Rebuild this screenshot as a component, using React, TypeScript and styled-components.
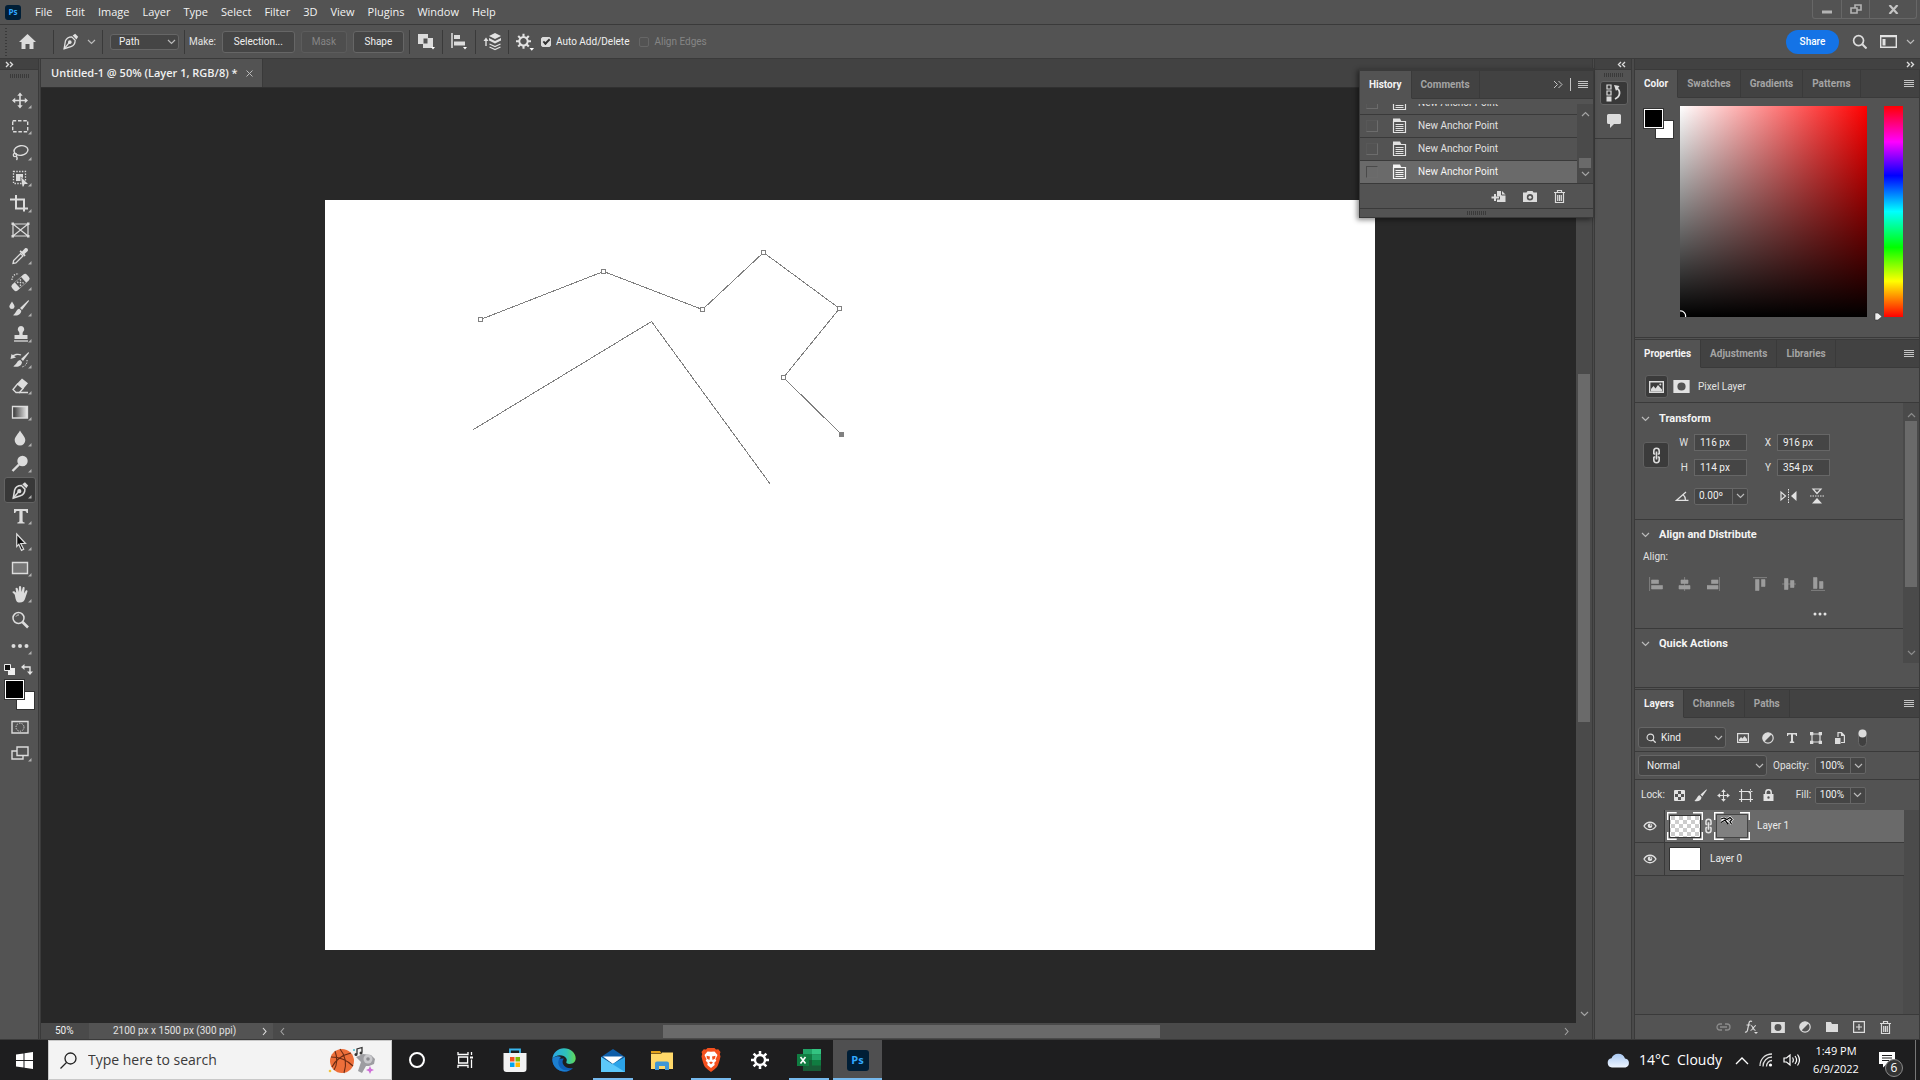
import React from "react";
import styled, { createGlobalStyle, css } from "styled-components";

const c = {
  panel: "#535353",
  dark: "#424242",
  line: "#3a3a3a",
  field: "#454545",
  edge: "#666666",
  canvas: "#282828",
  track: "#4a4a4a",
  thumb: "#6a6a6a",
  text: "#e2e2e2",
  dim: "#a4a4a4",
  icon: "#dcdcdc",
};

const ui = `Roboto, "Open Sans", "Liberation Sans", sans-serif`;
const segoe = `"Open Sans", "Noto Sans", "Liberation Sans", sans-serif`;

const Global = createGlobalStyle`
  *, *::before, *::after { box-sizing: border-box; }
  body { margin: 0; background: ${c.canvas}; overflow: hidden; }
  button, input, select { font: inherit; color: inherit; margin: 0; padding: 0; border: 0; background: none; border-radius: 0; outline: none; }
  h1, h2, h3, p, ul { margin: 0; padding: 0; font-size: inherit; font-weight: inherit; list-style: none; }
  svg { display: block; flex: none; }
`;

const Screen = styled.div`
  display: flex;
  flex-direction: column;
  height: 100vh;
  font: 10px/12px ${ui};
  color: ${c.text};
  background: ${c.panel};
  white-space: nowrap;
`;

/* ---------- menu bar ---------- */

const MenuBar = styled.header`
  display: flex;
  align-items: flex-start;
  justify-content: space-between;
  height: 24px;
  flex: none;
  padding: 0 3px 0 5px;
`;
const Menus = styled.nav`
  display: flex;
  align-items: center;
  gap: 13px;
  height: 24px;
  font: 11px/16px ${segoe};
  color: #f2f2f2;
`;
const Logo = styled.span<{ $big?: boolean }>`
  display: grid;
  place-items: center;
  width: ${(p) => (p.$big ? 22 : 16)}px;
  height: ${(p) => (p.$big ? 21 : 15)}px;
  margin-right: ${(p) => (p.$big ? 0 : 1)}px;
  border-radius: 3px;
  background: #001e36;
  color: #31a8ff;
  font: 700 ${(p) => (p.$big ? 11 : 8)}px/12px ${segoe};
`;
const MenuItem = styled.button``;
const WindowControls = styled.div`
  display: grid;
  grid-template-columns: 28px 28px 47px;
  height: 19px;
  border: 1px solid #676767;
  border-top: 0;
  border-radius: 0 0 3px 3px;
`;
const WindowButton = styled.button`
  display: grid;
  place-items: center;
  & + & { border-left: 1px solid #676767; }
`;

/* ---------- options bar ---------- */

const Options = styled.section`
  display: flex;
  align-items: center;
  height: 34px;
  flex: none;
  padding: 0 5px 0 0;
  border-top: 1px solid ${c.line};
`;
const Grip = styled.span<{ $vertical?: boolean }>`
  display: block;
  flex: none;
  ${(p) =>
    p.$vertical
      ? css`width: 2px; height: 28px; margin-left: 5px; background: repeating-linear-gradient(${c.line} 0 1px, transparent 1px 3px);`
      : css`width: 20px; height: 4px; background: repeating-linear-gradient(90deg, ${c.line} 0 1px, transparent 1px 2px);`}
`;
const Cell = styled.div<{ $w: number; $sep?: boolean; $gap?: number; $pad?: number }>`
  display: flex;
  align-items: center;
  justify-content: ${(p) => (p.$pad === undefined ? "center" : "flex-start")};
  gap: ${(p) => p.$gap ?? 6}px;
  min-width: ${(p) => p.$w}px;
  height: 24px;
  padding-left: ${(p) => p.$pad ?? 0}px;
  border-right: ${(p) => (p.$sep ? `1px solid ${c.line}` : "0")};
`;
const Plain = styled.button<{ $gap?: number }>`
  display: flex;
  align-items: center;
  justify-content: center;
  gap: ${(p) => p.$gap ?? 0}px;
`;
const PushButton = styled.button<{ $w: number }>`
  width: ${(p) => p.$w}px;
  height: 22px;
  border: 1px solid ${c.edge};
  border-radius: 3px;
  background: ${c.field};
  color: #f0f0f0;
  &:disabled { background: #4e4e4e; border-color: #5c5c5c; color: #858585; }
`;
const Check = styled.label<{ $off?: boolean }>`
  display: flex;
  align-items: center;
  gap: 5px;
  margin-right: 10px;
  color: ${(p) => (p.$off ? "#858585" : "#f0f0f0")};
  input {
    appearance: none;
    display: grid;
    place-items: center;
    width: 10px;
    height: 10px;
    border-radius: 2px;
    border: 1px solid ${(p) => (p.$off ? "#666" : c.icon)};
  }
  input:checked { background: ${c.icon}; }
  input:checked::after {
    content: "";
    width: 7px;
    height: 4px;
    border: solid #333;
    border-width: 0 0 2px 2px;
    transform: translateY(-1px) rotate(-45deg);
  }
`;
const OptionsEnd = styled.div`
  display: flex;
  align-items: center;
  gap: 13px;
  margin-left: auto;
`;
const Share = styled.button`
  width: 53px;
  height: 24px;
  border-radius: 12px;
  background: #1473e6;
  color: #fff;
  font-weight: 500;
`;

const Drop = styled.span<{ $w: number; $h: number; $icon?: boolean }>`
  position: relative;
  display: inline-flex;
  align-items: center;
  width: ${(p) => p.$w}px;
  height: ${(p) => p.$h}px;
  select {
    appearance: none;
    width: 100%;
    height: 100%;
    padding-left: ${(p) => (p.$icon ? 22 : 8)}px;
    border: 1px solid ${c.edge};
    border-radius: 3px;
    background: ${c.field};
    color: #f0f0f0;
  }
  svg { position: absolute; pointer-events: none; right: 3px; }
  .lead { right: auto; left: 8px; }
`;

/* ---------- workspace ---------- */

const Workspace = styled.main`
  display: grid;
  grid-template-columns: 38px 3px minmax(0, 1fr) 3px 36px 4px 285px;
  flex: 1;
  min-height: 0;
  border-top: 1px solid ${c.line};
  border-bottom: 1px solid ${c.line};
`;
const Divider = styled.div`
  background: #4a4a4a;
  border-left: 1px solid ${c.line};
  border-right: 1px solid ${c.line};
`;
const DockHead = styled.div<{ $end?: boolean }>`
  display: flex;
  align-items: center;
  justify-content: ${(p) => (p.$end ? "flex-end" : "flex-start")};
  flex: none;
  height: 11px;
  padding: 0 5px;
  background: ${c.dark};
  border-bottom: 1px solid ${c.line};
`;
const Column = styled.aside`
  display: flex;
  flex-direction: column;
  min-height: 0;
  background: ${c.panel};
`;
const Tools = styled.div`
  display: flex;
  flex-direction: column;
  align-items: center;
  padding: 4px 0 0 2px;
  ul { margin-top: 9px; }
`;
const Tool = styled.button<{ $on?: boolean }>`
  display: grid;
  place-items: center;
  width: 32px;
  height: 26px;
  border: 1px solid ${(p) => (p.$on ? "#636363" : "transparent")};
  border-radius: 3px;
  background: ${(p) => (p.$on ? "#383838" : "transparent")};
  color: ${c.icon};
`;
const MiniRow = styled.div`
  display: flex;
  align-items: center;
  justify-content: center;
  gap: 6px;
  height: 21px;
  padding-right: 4px;
`;
const Swatches = styled.div`
  position: relative;
  flex: none;
  width: 30px;
  height: 30px;
`;
const Swatch = styled.button<{ $front?: boolean }>`
  position: absolute;
  width: 19px;
  height: 19px;
  ${(p) =>
    p.$front
      ? css`left: 0; top: 0; background: #000; border: 1px solid #fff; outline: 1px solid #333;`
      : css`right: 0; bottom: 0; background: #fff; border: 1px solid #333;`}
`;
const ScreenTools = styled.div`
  padding-top: 4px;
`;

const Document = styled.section`
  position: relative;
  display: grid;
  grid-template-rows: 29px minmax(0, 1fr) 16px;
  grid-template-columns: minmax(0, 1fr) 16px;
  min-width: 0;
  min-height: 0;
`;
const DocTabs = styled.div`
  grid-column: 1 / -1;
  background: ${c.dark};
  border-bottom: 1px solid #303030;
`;
const DocTab = styled.div`
  display: inline-flex;
  align-items: center;
  gap: 8px;
  height: 28px;
  padding: 0 9px 0 10px;
  background: ${c.panel};
  border-right: 1px solid ${c.line};
  color: #f0f0f0;
  font: 600 11px/16px ${segoe};
`;
const Canvas = styled.div`
  overflow: hidden;
  background: ${c.canvas};
  padding: 112px 0 0 284px;
`;
const Paper = styled.div`
  width: 1050px;
  height: 750px;
  background: #fff;
`;
const VScroll = styled.div`
  display: grid;
  grid-template-rows: 286fr 348fr 301fr;
  justify-items: center;
  background: ${c.track};
  color: ${c.dim};
  span { width: 12px; background: ${c.thumb}; }
  svg { align-self: end; margin-bottom: 6px; }
`;
const Status = styled.footer`
  grid-column: 1 / -1;
  display: flex;
  background: ${c.panel};
`;
const Zoom = styled.input`
  width: 48px;
  padding-left: 14px;
  background: ${c.track};
  color: #f0f0f0;
`;
const DocInfo = styled.button`
  display: flex;
  align-items: center;
  justify-content: space-between;
  width: 184px;
  padding: 0 6px 0 24px;
  color: ${c.text};
`;
const HScroll = styled.div`
  flex: 1;
  display: grid;
  grid-template-columns: 390fr 497fr 416fr;
  align-items: center;
  background: ${c.track};
  color: ${c.dim};
  padding-right: 16px;
  span { height: 13px; background: ${c.thumb}; }
  svg { margin: 0 7px; }
  svg:last-child { justify-self: end; }
`;

/* ---------- panels ---------- */

const Panel = styled.section<{ $h?: number }>`
  display: flex;
  flex-direction: column;
  flex: ${(p) => (p.$h ? "none" : "1")};
  height: ${(p) => (p.$h ? `${p.$h}px` : "auto")};
  min-height: 0;
  border-right: 1px solid ${c.line};
  & + & { border-top: 3px double ${c.line}; }
`;
const TabStrip = styled.div`
  display: flex;
  flex: none;
  height: 28px;
  background: ${c.dark};
`;
const Tab = styled.button<{ $on?: boolean }>`
  padding: 0 9px;
  border-right: 1px solid ${c.line};
  border-bottom: 1px solid ${(p) => (p.$on ? c.panel : c.line)};
  background: ${(p) => (p.$on ? c.panel : "transparent")};
  color: ${(p) => (p.$on ? "#f4f4f4" : c.dim)};
  font-weight: 700;
`;
const TabEnd = styled.div`
  display: flex;
  flex: 1;
  align-items: center;
  justify-content: flex-end;
  gap: 7px;
  padding-right: 5px;
  border-bottom: 1px solid ${c.line};
  color: #c4c4c4;
`;
const Row = styled.div<{ $h: number; $line?: boolean; $gap?: number; $pad?: number; $top?: number }>`
  display: flex;
  align-items: center;
  flex: none;
  gap: ${(p) => p.$gap ?? 0}px;
  height: ${(p) => p.$h}px;
  padding-top: ${(p) => p.$top ?? 0}px;
  padding-left: ${(p) => p.$pad ?? 0}px;
  border-bottom: ${(p) => (p.$line ? `1px solid ${c.line}` : "0")};
`;

const HistoryPanel = styled.section`
  position: absolute;
  top: 9px;
  right: -2px;
  display: flex;
  flex-direction: column;
  width: 235px;
  border: 1px solid ${c.line};
  border-top-width: 3px;
  background: ${c.panel};
  box-shadow: -2px 2px 5px rgba(0, 0, 0, 0.45);
`;
const HistoryBody = styled.div`
  display: grid;
  grid-template-columns: minmax(0, 1fr) 16px;
  height: 80px;
  margin-top: 5px;
  border-bottom: 1px solid ${c.line};
`;
const HistoryList = styled.ul`
  display: flex;
  flex-direction: column;
  justify-content: flex-end;
  overflow: hidden;
`;
const HistoryItem = styled.li<{ $on?: boolean }>`
  display: flex;
  align-items: center;
  flex: none;
  height: 23px;
  padding-left: 6px;
  border-top: 1px solid ${c.line};
  background: ${(p) => (p.$on ? c.thumb : "transparent")};
  color: ${(p) => (p.$on ? "#f4f4f4" : c.text)};
  input {
    appearance: none;
    width: 12px;
    height: 12px;
    margin-right: 14px;
    border: 1px solid #6c6c6c;
    border-top-color: ${(p) => (p.$on ? "#4a4a4a" : "#585858")};
    border-left-color: ${(p) => (p.$on ? "#4a4a4a" : "#585858")};
  }
  svg { margin-right: 11px; }
`;
const HistoryScroll = styled.div`
  display: grid;
  grid-template-rows: 54px 10px 1fr;
  justify-items: center;
  background: ${c.track};
  color: ${c.dim};
  span { width: 12px; background: ${c.thumb}; }
  svg { margin-top: 7px; }
  svg:last-child { margin-top: 3px; }
`;
const HistoryActions = styled.div`
  display: flex;
  align-items: center;
  justify-content: flex-end;
  gap: 17px;
  height: 25px;
  padding-right: 28px;
  border-bottom: 1px solid ${c.line};
  color: ${c.icon};
`;
const HistoryFoot = styled.div`
  display: grid;
  place-items: center;
  height: 8px;
`;

const IconDock = styled.div`
  display: flex;
  flex-direction: column;
  align-items: center;
  height: 69px;
  padding: 3px 0 0 1px;
  border-bottom: 1px solid ${c.line};
`;
const DockButton = styled.button<{ $on?: boolean }>`
  display: grid;
  place-items: center;
  flex: none;
  width: 28px;
  height: 24px;
  margin-top: 4px;
  border: 1px solid ${(p) => (p.$on ? "#636363" : "transparent")};
  border-radius: 3px;
  background: ${(p) => (p.$on ? "#383838" : "transparent")};
  color: ${c.icon};
`;

const ColorBody = styled.div`
  display: flex;
  padding: 8px 0 0 9px;
`;
const ColorSwatches = styled.div`
  padding: 3px 6px 0 0;
`;
const Field = styled.div`
  width: 187px;
  height: 211px;
  background: linear-gradient(to top, #000, transparent), linear-gradient(to right, #fff, #f00);
  display: flex;
  align-items: flex-end;
`;
const HueMarker = styled.div`
  display: flex;
  align-items: flex-end;
  width: 17px;
  height: 215px;
  padding-left: 7px;
`;
const Hue = styled.input`
  appearance: none;
  width: 19px;
  height: 211px;
  background: linear-gradient(#f00, #f0f 17%, #00f 33%, #0ff 50%, #0f0 67%, #ff0 83%, #f00);
  &::-webkit-slider-thumb { appearance: none; width: 0; height: 0; }
`;

const Props = styled.div`
  display: grid;
  grid-template-columns: minmax(0, 1fr) 16px;
  height: 260px;
`;
const PropScroll = styled.div`
  display: grid;
  grid-template-rows: 18px 166px 1fr;
  justify-items: center;
  background: ${c.track};
  color: #8c8c8c;
  span { width: 12px; background: ${c.thumb}; }
  svg { margin-top: 9px; }
  svg:last-child { align-self: end; margin-bottom: 7px; }
`;
const SquareButton = styled.button<{ $s: number }>`
  display: grid;
  place-items: center;
  width: ${(p) => p.$s}px;
  height: ${(p) => p.$s}px;
  border: 1px solid #606060;
  border-radius: 3px;
  background: #3b3b3b;
  color: ${c.icon};
`;
const Heading = styled.button<{ $h: number }>`
  display: flex;
  align-items: center;
  gap: 9px;
  flex: none;
  height: ${(p) => p.$h}px;
  padding-left: 6px;
  color: #f4f4f4;
  font-size: 11px;
  font-weight: 700;
`;
const Block = styled.div<{ $h: number }>`
  display: flex;
  flex-direction: column;
  height: ${(p) => p.$h}px;
  border-bottom: 1px solid ${c.line};
  &:last-child { border-bottom: 0; }
`;
const TransformGrid = styled.div`
  display: grid;
  grid-template-columns: 27px 24px 53px 30px 53px;
  grid-template-rows: 17px 17px 24px;
  row-gap: 8px;
  align-items: center;
  padding-left: 8px;
  label { justify-self: end; padding-right: 6px; color: ${c.text}; }
`;
const LinkCell = styled.div`
  grid-row: 1 / 3;
`;
const AngleCell = styled.div`
  justify-self: end;
  padding-right: 5px;
`;
const Num = styled.input`
  width: 100%;
  height: 17px;
  padding-left: 5px;
  border: 1px solid ${c.edge};
  background: ${c.field};
  color: #f0f0f0;
`;
const Combo = styled.div<{ $w: number }>`
  display: flex;
  width: ${(p) => p.$w}px;
  height: 17px;
  border: 1px solid ${c.edge};
  border-radius: 2px;
  background: ${c.field};
  color: #f0f0f0;
  input { flex: 1; min-width: 0; padding-left: 4px; }
  button { display: grid; place-items: center; width: 15px; border-left: 1px solid ${c.edge}; }
`;
const Flips = styled.div`
  grid-column: 4 / 6;
  display: flex;
  justify-content: flex-end;
  gap: 13px;
  padding-right: 6px;
`;
const AlignRow = styled.div`
  display: flex;
  align-items: center;
  gap: 15px;
  height: 39px;
  padding-left: 14px;
  color: #9c9c9c;
  svg:nth-child(4) { margin-left: 17px; }
`;
const More = styled.button`
  align-self: flex-end;
  margin: 4px 76px 0 0;
`;

const FilterIcons = styled.div`
  display: flex;
  align-items: center;
  gap: 13px;
  color: ${c.icon};
`;
const Spread = styled.div<{ $w: number; $left?: number }>`
  display: flex;
  align-items: center;
  justify-content: space-between;
  width: ${(p) => p.$w}px;
  margin-left: ${(p) => p.$left ?? 0}px;
`;
const LayerTree = styled.ul`
  flex: 1;
  background: linear-gradient(90deg, #505050 268px, #4b4b4b 268px);
  && { padding-right: 15px; }
`;
const LayerRow = styled.li`
  display: grid;
  grid-template-columns: 30px minmax(0, 1fr);
  height: 33px;
  border-bottom: 1px solid ${c.line};
  background: ${c.panel};
`;
const LayerEye = styled.button`
  display: grid;
  place-items: center;
  border-right: 1px solid ${c.line};
`;
const LayerMain = styled.div<{ $on?: boolean }>`
  display: flex;
  align-items: center;
  gap: 1px;
  padding-left: 2px;
  background: ${(p) => (p.$on ? c.thumb : "transparent")};
  span { margin-left: 6px; color: #ececec; }
`;
const LayerActions = styled.div`
  display: grid;
  grid-template-columns: repeat(7, 27px);
  align-items: center;
  justify-content: end;
  flex: none;
  height: 25px;
  padding-right: 20px;
  border-top: 1px solid ${c.line};
  color: ${c.icon};
`;

/* ---------- taskbar ---------- */

const Taskbar = styled.footer`
  display: flex;
  align-items: stretch;
  flex: none;
  height: 40px;
  background: #1e1e1f;
  color: #fff;
  font-family: ${segoe};
`;
const Start = styled.button`
  display: grid;
  place-items: center;
  width: 48px;
`;
const Search = styled.label`
  display: flex;
  align-items: center;
  gap: 11px;
  width: 344px;
  padding: 0 15px 0 11px;
  border: 1px solid #c8c8c8;
  background: #f3f3f3;
  color: #333;
  input { flex: 1; min-width: 0; font: 14px/20px ${segoe}; }
  input::placeholder { color: #3a3a3a; opacity: 1; }
`;
const TaskApp = styled.button<{ $open?: boolean; $on?: boolean }>`
  display: grid;
  place-items: center;
  width: 49px;
  background: ${(p) => (p.$on ? "#4f4f50" : "transparent")};
  box-shadow: ${(p) => (p.$on ? "inset 0 -2px #76b9ed" : "none")};
  ${(p) => p.$open && css`background: linear-gradient(#76b9ed, #76b9ed) center bottom / 40px 2px no-repeat;`}
`;
const Tray = styled.div`
  display: flex;
  align-items: center;
  margin-left: auto;
  padding-right: 4px;
`;
const Weather = styled.button`
  display: flex;
  align-items: center;
  gap: 9px;
  margin-right: 13px;
  font-size: 14px;
  line-height: 20px;
  white-space: pre;
`;
const TrayIcons = styled.div`
  display: flex;
  align-items: center;
  gap: 7px;
`;
const Clock = styled.button`
  width: 72px;
  font-size: 11px;
  line-height: 18px;
  text-align: center;
`;
const Notice = styled.button`
  position: relative;
  display: grid;
  place-items: center;
  width: 44px;
  height: 40px;
  padding-right: 13px;
  border-right: 1px solid #777;
  span {
    position: absolute;
    left: 13px;
    top: 19px;
    width: 18px;
    height: 18px;
    border: 1px solid #8a8a8a;
    border-radius: 50%;
    background: #333;
    font-size: 12px;
    line-height: 16px;
  }
`;

/* ---------- icons ---------- */

type IconProps = { w: number; h?: number; children: React.ReactNode; className?: string; vb?: string };
const Svg = ({ w, h = w, children, className, vb }: IconProps) => (
  <svg className={className} width={w} height={h} viewBox={vb ?? `0 0 ${w} ${h}`} fill="none" stroke="currentColor" aria-hidden="true">
    {children}
  </svg>
);
const F = { fill: "currentColor", stroke: "none" };

const Down = ({ className }: { className?: string }) => (
  <Svg w={9} h={6} className={className}><path d="M1 1l3.5 3.5L8 1" stroke="#bbb" strokeWidth="1.2" /></Svg>
);
const Up = () => <Svg w={9} h={6}><path d="M1 5l3.5-3.5L8 5" strokeWidth="1.2" /></Svg>;
const ScrollDown = () => <Svg w={9} h={6}><path d="M1 1l3.5 3.5L8 1" strokeWidth="1.2" /></Svg>;
const Side = ({ left }: { left?: boolean }) => (
  <Svg w={5} h={9}><path d={left ? "M4 1L1 4.5 4 8" : "M1 1l3 3.5L1 8"} strokeWidth="1.1" /></Svg>
);
const Chevrons = ({ left }: { left?: boolean }) => (
  <Svg w={9} h={7}><path d={left ? "M4 1L1.500 3.500 4 6M8 1L5.500 3.500 8 6" : "M1 1l2.500 2.500L1 6M5 1l2.500 2.500L5 6"} stroke={c.icon} strokeWidth="1.400" /></Svg>
);
const Burger = () => (
  <Svg w={10} h={8}><path d="M0 .5h10M0 2.500h10M0 4.500h10M0 6.500h10" strokeWidth="1" /></Svg>
);
const Magnifier = ({ s, className, col }: { s: number; className?: string; col?: string }) => (
  <Svg w={s} vb="0 0 16 16" className={className}><g stroke={col ?? c.icon} strokeWidth="1.8"><circle cx="7" cy="7" r="5.300" /><path d="M11 11l4.500 4.500" strokeWidth="2.200" /></g></Svg>
);
const Chain = ({ w = 9, h = 17 }: { w?: number; h?: number }) => (
  <Svg w={w} h={h} vb="0 0 9 17"><g strokeWidth="1.600"><path d="M1.800 7V4a2.700 2.700 0 0 1 5.400 0v3M1.800 10v3a2.700 2.700 0 0 0 5.400 0v-3M4.500 4.500v8" /><path d="M1.500 7h1.800M5.700 7h1.800M1.500 10h1.800M5.700 10h1.800" /></g></Svg>
);
const Pen = ({ s = 20 }: { s?: number }) => (
  <Svg w={s} vb="0 0 20 20"><g strokeWidth="1.500"><path d="M2.500 18.500L4 9.500c1-3 4-5 7.500-5l4 4c0 3.500-2 6.500-5 7.500z" /><path d="M2.500 18.500l6.300-7.500" /><circle cx="9.200" cy="10.800" r="1.400" fill="currentColor" /><path d="M12.500 3l4.500 4.500 2-3L15.500 1z" fill="currentColor" stroke="none" /></g></Svg>
);
const Page = () => (
  <Svg w={15} h={16}><path d="M1.500 3.500h12v11h-12z" strokeWidth="1.200" /><path {...F} d="M1 .5h7l1.500 3H1z" /><path d="M3.500 6.500h8M3.500 8.500h8M3.500 10.500h8M3.500 12.500h8" strokeWidth="1" /></Svg>
);
const Trash = () => (
  <Svg w={11} h={13}><path d="M0 2.500h11M3.500 2.500v-2h4v2M1.500 3v9.500h8V3M3.700 5v6M5.500 5v6M7.300 5v6" strokeWidth="1.200" /></Svg>
);
const MaskIcon = ({ w = 15, h = 12 }: { w?: number; h?: number }) => (
  <Svg w={w} h={h} vb="0 0 15 12"><path {...F} fillRule="evenodd" d="M0 0h15v12H0zM7.500 2.200a3.800 3.800 0 1 0 0 7.600 3.800 3.800 0 0 0 0-7.600z" /></Svg>
);
const HalfCircle = () => (
  <Svg w={12}><circle cx="6" cy="6" r="5.200" strokeWidth="1.200" /><path {...F} d="M9.700 2.300A5.200 5.200 0 1 0 2.300 9.700z" /></Svg>
);
const Eye = () => (
  <Svg w={14} h={10}><path d="M1 5c3-5 9-5 12 0-3 5-9 5-12 0z" strokeWidth="1.300" /><circle cx="7" cy="4.800" r="2.300" {...F} /><circle cx="7.700" cy="4" r=".8" fill="#535353" stroke="none" /></Svg>
);
const Arrows4 = ({ s = 20 }: { s?: number }) => (
  <Svg w={s} vb="0 0 20 20"><path d="M10 3v14M3 10h14" strokeWidth="1.700" /><path {...F} d="M10 .2l3.600 4.600H6.400zM10 19.800l3.600-4.600H6.400zM.2 10l4.600-3.600v7.200zM19.800 10l-4.600-3.600v7.200z" /></Svg>
);
const Brush = ({ s = 13 }: { s?: number }) => (
  <Svg w={s} vb="0 0 14 14"><path {...F} d="M13.500.3L7 6l2 2L13.800 1zM6.200 6.800C3.500 7 3.800 10 .5 12.800c4 1.200 7.300-.6 7.600-4z" /></Svg>
);
const Gear = ({ s, col = c.icon }: { s: number; col?: string }) => (
  <Svg w={s} vb="0 0 20 20"><circle cx="10" cy="10" r="5.600" stroke={col} strokeWidth="2.600" /><path d="M10 0v4M10 16v4M0 10h4M16 10h4M2.930 2.930l2.800 2.800M14.270 14.270l2.800 2.800M2.930 17.070l2.800-2.800M14.270 5.730l2.800-2.800" stroke={col} strokeWidth="2.800" /></Svg>
);

const toolArt: Record<string, React.ReactNode> = {
  "Move": <><path d="M12 6v13M5.500 12.500h13" strokeWidth="1.600" /><path {...F} d="M12 4.500l2.700 3.200H9.300zM12 20.500l2.700-3.200H9.300zM4 12.500l3.200-2.700v5.400zM20 12.500l-3.200-2.700v5.400z" /></>,
  "Rectangular Marquee": <path d="M4.700 6.700h15v11h-15z" strokeDasharray="3.500 1.800" strokeWidth="1.400" />,
  "Lasso": <><ellipse cx="13" cy="10.500" rx="7" ry="4.800" strokeWidth="1.400" transform="rotate(-10 13 10.500)" /><circle cx="7" cy="15" r="1.700" strokeWidth="1.300" /><path d="M8 16c1.500 1.500 1.500 2.800.5 4" strokeWidth="1.300" /></>,
  "Object Selection": <><path d="M5.500 5.500h12v12h-12z" strokeDasharray="1.400 1.400" strokeWidth="1.300" /><path {...F} d="M8 8h7v4l-2.500-1.500V15H8z" /><path {...F} d="M13 11l7 7h-3.500l-1 2.500h-1z" /></>,
  "Crop": <path d="M2 7.500h14v12M8 3v13.500h12" strokeWidth="2" />,
  "Frame": <><path d="M5 6h15v12H5zM5 6l15 12M20 6L5 18" strokeWidth="1.200" /><path {...F} d="M3.500 4.500h2.500v2.500H3.500zM19 4.500h2.500v2.500H19zM3.500 17h2.500v2.500H3.500zM19 17h2.500v2.500H19z" /></>,
  "Eyedropper": <><path d="M5 19.500l.6-2.900 7-7 2.300 2.300-7 7z" strokeWidth="1.300" /><path {...F} d="M11.500 7.500l1.200-1.200 1.300 1.200 2.800-3c1.900-1.500 4.200.8 2.700 2.700l-3 2.800 1.200 1.300-1.200 1.200z" /></>,
  "Spot Healing": <><path d="M4 10c0-4 3-6.500 7-6" strokeDasharray="1.300 1.300" strokeWidth="1.200" /><g transform="rotate(-42 12.500 12.500)"><rect x="2.500" y="8.500" width="20" height="8" rx="2.500" {...F} /><rect x="8.300" y="8.800" width="8.400" height="7.400" fill={c.panel} stroke="none" /><path d="M10 10.500h1.300M13.500 10.500h1.300M11.800 12.500h1.300M10 14.500h1.300M13.500 14.500h1.300" strokeWidth="1.500" /></g></>,
  "Mixer Brush": <><path {...F} d="M4 5.500c1.500 2.500 2.600 3.700 2.600 5.300a2.700 2.700 0 0 1-5.300 0C1.300 9.200 2.500 8 4 5.500z" /><path {...F} d="M20.500 4L12 12l2 2 7-9zM11.300 12.800c-3 .2-2.500 3.800-6.300 6.400 4.500 1 8-.7 8.300-4.500z" /></>,
  "Clone Stamp": <><path {...F} d="M13 4a3.300 3.300 0 0 1 2.300 5.600c-.8.9-.8 1.800-.6 3.400h4.800v4H6.500v-4h4.800c.2-1.600.2-2.500-.6-3.400A3.300 3.300 0 0 1 13 4z" /><path d="M6 19h14" strokeWidth="1.300" /></>,
  "History Brush": <><path {...F} d="M20.500 4L13 11l2 2 6-8zM12.300 12c-3 .2-3 3.500-7 6.500 5 1 8.500-.5 8.700-4.500z" /><path d="M4 9c2-2.500 6-3.500 9-2" strokeWidth="1.300" /><path {...F} d="M2.500 11l1-5L8 9.500z" /><path d="M19 12c.5 3.500-1.500 6-5 7" strokeDasharray="1.300 1.300" /></>,
  "Eraser": <><path d="M5 15.500L9.500 10l5.500 4.500-3.500 4H8z" strokeWidth="1.300" /><path {...F} d="M9 9.800L14 4.500l6 4.800-4.800 5.800zM11 17.800h9v1.400h-9z" /></>,
  "Blur": <path {...F} d="M12 4.500c2.800 4.700 5.300 6.500 5.300 9.800a5.300 5.300 0 0 1-10.600 0C6.700 11 9.200 9.200 12 4.500z" />,
  "Dodge": <><circle cx="14.500" cy="9" r="5.200" {...F} /><path d="M11 12.500l-6.500 6.500" strokeWidth="2.400" /></>,
  "Type": <path {...F} d="M6 5h14v4h-1.400c-.2-1.500-.8-2-2.400-2h-1.600v10c0 1 .5 1.200 2 1.400V19.500H9.400v-1.100c1.500-.2 2-.4 2-1.400V7H9.800C8.200 7 7.600 7.500 7.400 9H6z" />,
  "Path Selection": <path d="M8.700 4l8.800 9.500h-4.800l3 5.800-2.200 1.100-2.700-6-2.100 2.200z" fill="#111" strokeWidth="1.200" />,
  "Rectangle": <path d="M4.500 6.500h15v11h-15z" fill="#777" strokeWidth="1.400" />,
  "Hand": <path {...F} d="M6.800 12.700L4.200 10c1.300-1.300 2.500-.8 4 .8L7.500 6.200c1-.9 2-.6 2.300.6l.9 3.300.3-5.600c.9-.9 1.900-.7 2.100.4l.4 5.200 1.200-4.600c1-.8 2-.4 1.900.8l-.5 5.300 1.700-3c1.200-.6 1.900 0 1.600 1.200l-2.100 6.200c-.8 3-2.500 4.500-5.500 4.500-3.300 0-4-1.800-5-7.800z" />,
  "Zoom": <><circle cx="10.500" cy="10" r="5.500" strokeWidth="1.500" /><path d="M8 8.500c.7-1.200 2-1.700 3-1.500" /><path d="M14.500 14l5.500 5.500" strokeWidth="2.600" /></>,
  "Edit Toolbar": <><circle cx="5.500" cy="12" r="2" {...F} /><circle cx="12" cy="12" r="2" {...F} /><circle cx="18.500" cy="12" r="2" {...F} /></>,
};
const toolNames = ["Move", "Rectangular Marquee", "Lasso", "Object Selection", "Crop", "Frame", "Eyedropper", "Spot Healing", "Mixer Brush", "Clone Stamp", "History Brush", "Eraser", "Gradient", "Blur", "Dodge", "Pen", "Type", "Path Selection", "Rectangle", "Hand", "Zoom", "Edit Toolbar"];
const noCorner = ["Frame", "Zoom"];

const ToolIcon = ({ name }: { name: string }) => (
  <Svg w={24}>
    {name === "Gradient" && (
      <>
        <defs><linearGradient id="toolGradient"><stop stopColor="#333" /><stop offset="1" stopColor="#eee" /></linearGradient></defs>
        <path d="M4.500 6.500h15v11.500h-15z" fill="url(#toolGradient)" strokeWidth="1.300" />
      </>
    )}
    {name === "Pen" && <g transform="translate(3 3) scale(.9)" strokeWidth="1.700"><path d="M2.500 19L4 10c1-3 4-5 7.500-5l4 4c0 3.500-2 6.500-5 7.500z" /><path d="M2.500 19l6-7" /><circle cx="9.200" cy="11.300" r="1.500" fill="currentColor" /><path d="M12.500 3.500L17 8l2-3-3.500-3.500z" fill="currentColor" stroke="none" /></g>}
    {toolArt[name]}
    {!noCorner.includes(name) && <path d="M23.500 17v3.500H20z" fill="#b0b0b0" stroke="none" />}
  </Svg>
);

const menus = ["File", "Edit", "Image", "Layer", "Type", "Select", "Filter", "3D", "View", "Plugins", "Window", "Help"];

const ComboField = ({ label, value, w }: { label: string; value: string; w: number }) => (
  <Combo $w={w}>
    <input aria-label={label} defaultValue={value} />
    <button aria-label={`${label} presets`}><Down /></button>
  </Combo>
);

const alignArt = [
  "M.6 0v14M2.500 3h7v3.500h-7zM2.500 8.500h11V12h-11z",
  "M6.600 0v14M3 3h7v3.500H3zM1 8.500h11V12H1z",
  "M12.400 0v14M4.500 3h6.500v3.500H4.500zM0 8.500h11V12H0z",
  "M0 .6h14M2.500 2.500H6v11H2.500zM8.500 2.500H12v7H8.500z",
  "M0 7h14M2.500 1.500H6v11H2.500zM8.500 3.500H12v7H8.500z",
  "M0 13.400h14M2.500.5H6v11H2.500zM8.500 4.500H12v7H8.500z",
];

const anchors: [number, number][] = [[155, 119], [278, 71], [377, 109], [438, 52], [514, 108], [458, 177]];

const History = () => (
  <HistoryPanel>
    <TabStrip role="tablist">
      <Tab $on>History</Tab>
      <Tab>Comments</Tab>
      <TabEnd>
        <Svg w={10} h={9}><path d="M1 1l3.500 3.500L1 8M5.500 1L9 4.500 5.500 8" /></Svg>
        <Svg w={1} h={13}><path d="M.5 0v13" /></Svg>
        <Burger />
      </TabEnd>
    </TabStrip>
    <HistoryBody>
      <HistoryList>
        {[0, 1, 2, 3].map((i) => (
          <HistoryItem key={i} $on={i === 3}>
            <input type="checkbox" aria-label="Set history brush source" />
            <Page />
            New Anchor Point
          </HistoryItem>
        ))}
      </HistoryList>
      <HistoryScroll><Up /><span /><ScrollDown /></HistoryScroll>
    </HistoryBody>
    <HistoryActions>
      <Plain aria-label="New document from state"><Svg w={15} h={13}><path {...F} d="M6 1h5l3.500 3.500V12H6V9.500h3v-3H6z" /><path d="M4 4v7M.5 7.500H8" strokeWidth="2" /><path d="M10.500.5v4.500h4.500" stroke={c.panel} /></Svg></Plain>
      <Plain aria-label="New snapshot"><Svg w={14} h={12}><path {...F} fillRule="evenodd" d="M4.500 1h5l1 1.500H14V12H0V2.500h3.500zM7 4a3.200 3.200 0 1 0 0 6.400A3.200 3.200 0 0 0 7 4z" /><circle cx="7" cy="7.200" r="1.500" {...F} /></Svg></Plain>
      <Plain aria-label="Delete state"><Trash /></Plain>
    </HistoryActions>
    <HistoryFoot><Grip /></HistoryFoot>
  </HistoryPanel>
);

const TabHead = ({ names }: { names: string[] }) => (
  <TabStrip role="tablist">
    {names.map((n, i) => <Tab key={n} $on={i === 0}>{n}</Tab>)}
    <TabEnd><Burger /></TabEnd>
  </TabStrip>
);

const PropertiesPanel = () => (
  <Panel $h={350}>
    <TabHead names={["Properties", "Adjustments", "Libraries"]} />
    <Row $h={35} $line $gap={5} $pad={10} $top={3}>
      <SquareButton $s={23} aria-label="Pixel layer properties">
        <Svg w={15} h={12}><path d="M.7.700h13.600v10.600H.7z" strokeWidth="1.400" /><path {...F} d="M2 10.500V8l2.500-3 2 2.500L9 4l4 4.500v2z" /><circle cx="11.300" cy="3.500" r="1" {...F} /></Svg>
      </SquareButton>
      <MaskIcon w={17} h={13} />
      <Spread $w={60} $left={3}>Pixel Layer</Spread>
    </Row>
    <Props>
      <div>
        <Block $h={117}>
          <Heading $h={31}><Down />Transform</Heading>
          <TransformGrid>
            <LinkCell><SquareButton $s={26} aria-label="Link width and height"><Chain /></SquareButton></LinkCell>
            <label htmlFor="w">W</label><Num id="w" defaultValue="116 px" />
            <label htmlFor="x">X</label><Num id="x" defaultValue="916 px" />
            <label htmlFor="h">H</label><Num id="h" defaultValue="114 px" />
            <label htmlFor="y">Y</label><Num id="y" defaultValue="354 px" />
            <span />
            <AngleCell><Svg w={14} h={10}><path d="M13.500 9.300H1.500L11 1M8 3.500c1.700 1.500 2.500 3.500 2.500 5.500" strokeWidth="1.200" /></Svg></AngleCell>
            <ComboField label="Angle" value="0.00º" w={54} />
            <Flips>
              <Plain aria-label="Flip horizontal"><Svg w={17} h={14}><path d="M1 3v8l4.500-4z" strokeWidth="1.200" /><path d="M8.500 0v14" strokeDasharray="1.500 1" /><path {...F} d="M16.500 2v10L11 7z" /></Svg></Plain>
              <Plain aria-label="Flip vertical"><Svg w={14} h={16}><path d="M3 1h8L7 5.500z" strokeWidth="1.200" /><path d="M0 8h14" strokeDasharray="1.500 1" /><path {...F} d="M2 15.500h10L7 10z" /></Svg></Plain>
            </Flips>
          </TransformGrid>
        </Block>
        <Block $h={109}>
          <Heading $h={30}><Down />Align and Distribute</Heading>
          <Row $h={14} $pad={8}>Align:</Row>
          <AlignRow>
            {alignArt.map((d) => <Svg key={d} w={14}><path d={d} fill="currentColor" strokeWidth="1" strokeOpacity=".6" /></Svg>)}
          </AlignRow>
          <More aria-label="More align options"><Svg w={14} h={14}><circle cx="2" cy="7" r="1.500" {...F} /><circle cx="7" cy="7" r="1.500" {...F} /><circle cx="12" cy="7" r="1.500" {...F} /></Svg></More>
        </Block>
        <Block $h={30}><Heading $h={29}><Down />Quick Actions</Heading></Block>
      </div>
      <PropScroll><Up /><span /><ScrollDown /></PropScroll>
    </Props>
  </Panel>
);

const Corners = () => <path d="M.7 8V.7h9M26 .7h9.300V8M.7 20v7.300h9M26 27.300h9.300V20" stroke="#fff" strokeWidth="1.400" />;

const LayersPanel = () => (
  <Panel>
    <TabHead names={["Layers", "Channels", "Paths"]} />
    <Row $h={34} $line $gap={11} $pad={3} $top={6}>
      <Drop $w={88} $h={21} $icon>
        <Magnifier s={10} className="lead" />
        <select aria-label="Filter type"><option>Kind</option></select>
        <Down />
      </Drop>
      <FilterIcons>
        <Spread $w={108}>
          <Svg w={12} h={10}><path d="M.6.600h10.800v8.800H.6z" strokeWidth="1.200" /><path {...F} d="M2 8V6.500L4 4l1.500 1.500L7.500 3 10 6v2z" /></Svg>
          <HalfCircle />
          <Svg w={10} h={10}><path {...F} d="M0 0h10v3H9C8.800 2 8.500 1.600 7.500 1.600H6v6.200c0 .6.300.8 1.200.9V10H2.800V8.700c.9-.1 1.200-.3 1.200-.9V1.600H2.500C1.500 1.600 1.200 2 1 3H0z" /></Svg>
          <Svg w={12}><path d="M2 2h8v8H2z" strokeWidth="1.200" /><path {...F} d="M0 0h3.300v3.300H0zM8.700 0H12v3.300H8.700zM0 8.700h3.300V12H0zM8.700 8.700H12V12H8.700z" /></Svg>
          <Svg w={10} h={12}><path d="M3 5V.6h3.500L9.400 3.500v7H6" strokeWidth="1.200" /><path {...F} d="M0 6h5.500v6H0zM6 0v4h4z" /></Svg>
        </Spread>
        <Svg w={9} h={18}><rect x=".5" y=".5" width="8" height="17" rx="4" fill="#404040" stroke="#666" /><circle cx="4.500" cy="4.500" r="4" {...F} /></Svg>
      </FilterIcons>
    </Row>
    <Row $h={28} $line $gap={6} $pad={3}>
      <Drop $w={129} $h={21}>
        <select aria-label="Blend mode"><option>Normal</option></select>
        <Down />
      </Drop>
      <Spread $w={93}>Opacity:<ComboField label="Opacity" value="100%" w={51} /></Spread>
    </Row>
    <Row $h={30} $gap={9} $pad={6}>
      <span>Lock:</span>
      <Spread $w={100}>
        <Svg w={11} h={11}><path d="M.5.500h10v10H.5z" /><path {...F} d="M1 1h3v3H1zM7 1h3v3H7zM4 4h3v3H4zM1 7h3v3H1zM7 7h3v3H7z" /></Svg>
        <Brush />
        <Arrows4 s={13} />
        <Svg w={14} h={13}><path d="M2.500 0v13M0 2.500h9.500l2 2v6M0 10.500h14M11.500 9v4" strokeWidth="1.200" /><path d="M9.500 2.500h4M11.500 0v4" strokeDasharray="1.500 1" /></Svg>
        <Svg w={11} h={12}><path d="M2.800 6V3.500a2.700 2.700 0 0 1 5.400 0V6" strokeWidth="1.500" /><path {...F} fillRule="evenodd" d="M.5 5h10v7H.5zM5.500 7.300a1 1 0 0 0 0 2.400 1 1 0 0 0 0-2.400z" /></Svg>
      </Spread>
      <Spread $w={70} $left={13}>Fill:<ComboField label="Fill" value="100%" w={51} /></Spread>
    </Row>
    <LayerTree>
      <LayerRow>
        <LayerEye aria-label="Toggle Layer 1"><Eye /></LayerEye>
        <LayerMain $on>
          <Svg w={36} h={28}>
            <defs><pattern id="checker" width="8" height="8" patternUnits="userSpaceOnUse"><path fill="#fff" stroke="none" d="M0 0h8v8H0z" /><path fill="#ccc" stroke="none" d="M0 0h4v4H0zM4 4h4v4H4z" /></pattern></defs>
            <path d="M2.500 3.500h31v22h-31z" fill="url(#checker)" stroke="#333" /><Corners />
          </Svg>
          <Chain w={9} h={16} />
          <Svg w={36} h={28}>
            <path d="M2.500 2.500h31v23h-31z" fill="#808080" stroke="#444" />
            <path d="M7 7l3-1 3 1.500 3-2 2 2-2 2 1.500 2.500M7 10l4-2 3 3" stroke="#fff" strokeWidth="2.500" />
            <path d="M7 7l3-1 3 1.500 3-2 2 2-2 2 1.500 2.500M7 10.500l4-2.500 3 4" stroke="#000" strokeWidth="1.300" />
            <Corners />
          </Svg>
          <span>Layer 1</span>
        </LayerMain>
      </LayerRow>
      <LayerRow>
        <LayerEye aria-label="Toggle Layer 0"><Eye /></LayerEye>
        <LayerMain>
          <Svg w={36} h={28}><path d="M2.500 2.500h31v23h-31z" fill="#fff" stroke="#333" /></Svg>
          <span>Layer 0</span>
        </LayerMain>
      </LayerRow>
    </LayerTree>
    <LayerActions>
      <Plain aria-label="Link layers"><Svg w={15} h={8}><g stroke="#8c8c8c" strokeWidth="1.300"><path d="M6 1H4a3 3 0 0 0 0 6h2M9 1h2a3 3 0 0 1 0 6H9M4 4h7" /></g></Svg></Plain>
      <Plain aria-label="Layer style"><Svg w={14} h={14}><path d="M8 1.500c-1.500-1-2.700 0-3 1.500L3.500 10c-.3 1.700-1.200 2.500-2.500 2M2.500 5h4M7 5.500c2 0 2 5 4.500 5M12 5.500c-2 0-3.500 5-5.500 5" strokeWidth="1.200" /><path {...F} d="M10 12h4l-2 2z" /></Svg></Plain>
      <Plain aria-label="Add mask"><MaskIcon w={14} h={11} /></Plain>
      <Plain aria-label="Adjustment layer"><HalfCircle /></Plain>
      <Plain aria-label="New group"><Svg w={12} h={10}><path {...F} d="M0 0h5l1 2h6v8H0z" /></Svg></Plain>
      <Plain aria-label="New layer"><Svg w={12}><path d="M.6.600h10.800v10.800H.6zM6 3v6M3 6h6" strokeWidth="1.200" /></Svg></Plain>
      <Plain aria-label="Delete layer"><Trash /></Plain>
    </LayerActions>
  </Panel>
);

const TaskApps = () => (
  <>
    <TaskApp aria-label="Cortana"><Svg w={18}><circle cx="9" cy="9" r="7" stroke="#fff" strokeWidth="2" /></Svg></TaskApp>
    <TaskApp aria-label="Task view"><Svg w={17} h={16}><g stroke="#fff" strokeWidth="1.300"><path d="M1 0v2.500h10V0M1 16v-2.500h10V16M1.600 5h9v6h-9zM14.500 0v3M14.500 7.500V16" /><path d="M13 4.500h3v2h-3z" fill="#fff" stroke="none" /></g></Svg></TaskApp>
    <TaskApp aria-label="Microsoft Store"><Svg w={24} h={26}><path d="M7 7V2.500h10V7" stroke="#39b6ee" strokeWidth="1.800" /><path d="M.5 6h23v16a3 3 0 0 1-3 3h-17a3 3 0 0 1-3-3z" fill="#f2f2f2" stroke="none" /><g stroke="none"><path fill="#f25022" d="M7 10h4.500v4.500H7z" /><path fill="#7fba00" d="M12.500 10H17v4.500h-4.500z" /><path fill="#00a4ef" d="M7 15.500h4.500V20H7z" /><path fill="#ffb900" d="M12.500 15.500H17V20h-4.500z" /></g></Svg></TaskApp>
    <TaskApp aria-label="Microsoft Edge"><Svg w={24} h={24}>
      <defs><linearGradient id="edgeTop" x1="0" x2="1"><stop stopColor="#2aa8e8" /><stop offset=".6" stopColor="#2fc2b8" /><stop offset="1" stopColor="#62d955" /></linearGradient></defs>
      <g stroke="none"><path fill="#0f5fb8" d="M.5 11a12 12 0 0 0 20.500 9c-4 1-8.500-.5-10-4-1-2.500 0-4.500 1-5.500z" /><path fill="url(#edgeTop)" d="M.3 11C1 4.500 6 .3 12 .3c6.500 0 11.700 4.700 11.700 10 0 3.700-3 5.700-6 5.700-2.700 0-3.900-1-3.300-2.200.5-1 .6-2.200-.2-3.500C12 6.500 4 6 .3 11z" /><path fill="#1c7fd0" d="M.3 11C2 8 6 7.500 9 9c-4 3-3.500 9 1 12 2 1.500 5 1.500 7.500 1.200C9 26 .3 20 .3 11z" /></g>
    </Svg></TaskApp>
    <TaskApp $open aria-label="Mail"><Svg w={24} h={23}><g stroke="none"><path fill="#0f5ea8" d="M0 8L12 0l12 8-12 7z" /><path fill="#fff" d="M2 7.500h20L12 15z" /><path fill="#2ea5ea" d="M0 8l12 7.500V23H0z" /><path fill="#2ba3e8" d="M24 8L8 17v6h16z" /><path fill="#5cc8fa" d="M0 8l24 15H0z" /></g></Svg></TaskApp>
    <TaskApp aria-label="File Explorer"><Svg w={22} h={19}><g stroke="none"><path fill="#e3a21a" d="M0 0h9l1.500 2.500H0z" /><path fill="#ffd869" d="M0 3h10l1-1.500h11V18H0z" /><path fill="#3f97d6" d="M4 19v-6.500a2 2 0 0 1 2-2h10a2 2 0 0 1 2 2V19h-4v-4H8v4z" /></g></Svg></TaskApp>
    <TaskApp $open aria-label="Brave"><Svg w={20} h={24}><g stroke="none"><path fill="#f4501e" d="M5 1.500L6.500 0h7L15 1.500l2.300-.2L19.500 4l-.7 2 .7 2.500c-1 4.500-2 8-3.500 10.500-2 2-4 3.500-6 5-2-1.500-4-3-6-5C2.500 16.500 1.500 13 .5 8.500L1.200 6 .5 4l2.200-2.700z" /><path fill="#fff" d="M10 3.800l3.500-.4 3 3.600-2 4.300.8 1.400-2 2 .4 2.300L10 20l-3.700-3 .4-2.300-2-2 .8-1.400-2-4.300 3-3.600z" /><path fill="#f4501e" d="M5.500 7.800l3.500.8L8.400 12l-2.500-1.500zM14.500 7.800l-3.500.8.6 3.400 2.500-1.500zM8 14.500l2-1 2 1-2 1.700z" /></g></Svg></TaskApp>
    <TaskApp aria-label="Settings"><Gear s={18} col="#fff" /></TaskApp>
    <TaskApp $open aria-label="Excel"><Svg w={24} h={22}><g stroke="none"><path fill="#185c37" d="M6 0h18v22H6z" /><path fill="#21a366" d="M6 0h9v5.500H6z" /><path fill="#33c481" d="M15 0h9v5.500h-9z" /><path fill="#107c41" d="M6 5.500h9V11H6z" /><path fill="#21a366" d="M15 5.500h9V11h-9z" /><path fill="#107c41" d="M15 11h9v5.500h-9z" /><path fill="#107c41" d="M0 5h12v12H0z" /></g><path d="M3.500 8l5 6.500M8.500 8l-5 6.500" stroke="#fff" strokeWidth="1.600" /></Svg></TaskApp>
    <TaskApp $on aria-label="Photoshop"><Logo $big>Ps</Logo></TaskApp>
  </>
);

export default function App() {
  return (
    <Screen>
      <Global />
      <MenuBar>
        <Menus>
          <Logo>Ps</Logo>
          {menus.map((m) => <MenuItem key={m}>{m}</MenuItem>)}
        </Menus>
        <WindowControls>
          <WindowButton aria-label="Minimize"><Svg w={10} h={10}><path d="M0 8h10" strokeWidth="3" stroke="#b4b4b4" /></Svg></WindowButton>
          <WindowButton aria-label="Restore"><Svg w={12} h={10}><g stroke="#b4b4b4" strokeWidth="1.600"><path d="M5 1h6v5H5z" /><path d="M1 4h6v5H1z" fill={c.panel} /></g></Svg></WindowButton>
          <WindowButton aria-label="Close"><Svg w={11} h={9}><path d="M1.500 0l8 9M9.500 0l-8 9" stroke="#c4c4c4" strokeWidth="2.200" /></Svg></WindowButton>
        </WindowControls>
      </MenuBar>

      <Options>
        <Grip $vertical />
        <Cell $w={47} $sep $pad={12}><Plain aria-label="Home"><Svg w={17} h={15}><path {...F} fill={c.icon} d="M8.500 0L17 8h-2.500v7H10.500v-5h-4v5h-4V8H0z" /></Svg></Plain></Cell>
        <Cell $w={49} $sep $gap={8} $pad={8}><Pen s={17} /><Down /></Cell>
        <Cell $w={82} $sep $pad={7}>
          <Drop $w={69} $h={16}><select aria-label="Tool mode"><option>Path</option></select><Down /></Drop>
        </Cell>
        <Cell $w={225} $sep $pad={4}>
          Make:
          <PushButton $w={73}>Selection...</PushButton>
          <PushButton $w={46} disabled>Mask</PushButton>
          <PushButton $w={51}>Shape</PushButton>
        </Cell>
        <Cell $w={33} $sep><Plain aria-label="Path operations"><Svg w={17} h={17}><path {...F} fill={c.icon} fillRule="evenodd" d="M0 1h10v4h5v10H5v-4H0zM5.500 5.500v5h4v-5z" /><path d="M13 14h4l-2 2.500z" fill="#fff" stroke="none" /></Svg></Plain></Cell>
        <Cell $w={33} $sep><Plain aria-label="Path alignment"><Svg w={17} h={17}><path d="M1 0v15" strokeWidth="1.500" /><path {...F} fill={c.icon} d="M3 2h6v4H3zM3 8.500h11v4H3z" /><path d="M12 14h4l-2 2.500z" fill="#fff" stroke="none" /></Svg></Plain></Cell>
        <Cell $w={33} $sep><Plain aria-label="Path arrangement"><Svg w={18} h={18}><path d="M3 7v6" strokeWidth="1.400" /><path {...F} d="M3 4.500L5.500 8H.5z" /><path {...F} d="M12 0l6 3-6 3-6-3z" /><path {...F} d="M6 5l6 3 6-3v2.500l-6 3-6-3z" /><path d="M6.500 11l5.500 2.500 5.500-2.500M6.500 14l5.500 2.500 5.500-2.500" strokeWidth="1.200" /></Svg></Plain></Cell>
        <Cell $w={32} $pad={7}><Plain aria-label="Path options"><Svg w={18} h={18} vb="0 0 24 24"><circle cx="10" cy="11" r="5.600" strokeWidth="2.600" /><path d="M10 1v4M10 17v4M0 11h4M16 11h4M2.930 3.930l2.800 2.800M14.270 15.270l2.800 2.800M2.930 18.070l2.800-2.800M14.270 6.730l2.800-2.800" strokeWidth="2.800" /><path d="M18 20h6l-3 3.500z" fill="#fff" stroke="none" /></Svg></Plain></Cell>
        <Check><input type="checkbox" defaultChecked />Auto Add/Delete</Check>
        <Check $off><input type="checkbox" disabled />Align Edges</Check>
        <OptionsEnd>
          <Share>Share</Share>
          <Plain aria-label="Search"><Magnifier s={15} /></Plain>
          <Plain $gap={9} aria-label="Choose workspace">
            <Svg w={17} h={13}><path d="M.7.700h15.600v11.600H.7zM.7 1.500h15.600" strokeWidth="1.400" /><path {...F} d="M2.500 4h3v6.500h-3z" /></Svg>
            <Down />
          </Plain>
        </OptionsEnd>
      </Options>

      <Workspace>
        <Column>
          <DockHead><Chevrons /></DockHead>
          <Tools>
            <Grip />
            <ul>
              {toolNames.map((n) => (
                <li key={n}><Tool $on={n === "Pen"} aria-label={n}><ToolIcon name={n} /></Tool></li>
              ))}
            </ul>
            <MiniRow>
              <Plain aria-label="Default colors"><Svg w={11} h={11}><path d="M4 4h7v7H4z" fill="#eee" stroke="none" /><path d="M.5.500h6v6h-6z" fill="#111" stroke="#eee" /></Svg></Plain>
              <Plain aria-label="Switch colors"><Svg w={12} h={11}><path d="M3 3h6v5" strokeWidth="1.400" /><path {...F} d="M0 3l3.500-3v6zM9 11L6 7.500h6z" /></Svg></Plain>
            </MiniRow>
            <Swatches>
              <Swatch aria-label="Background color" />
              <Swatch $front aria-label="Foreground color" />
            </Swatches>
            <ScreenTools>
              <Tool aria-label="Quick mask"><Svg w={24}><path d="M4 6.500h16v11.500H4z" strokeWidth="1.400" /><circle cx="12" cy="12.200" r="4" strokeDasharray="1.300 1.200" /></Svg></Tool>
              <Tool aria-label="Screen mode"><Svg w={24}><path d="M4 10h11v8H4z" strokeWidth="1.400" /><path d="M9 6h11v8.500H9z" fill={c.panel} strokeWidth="1.400" /><path d="M23.500 17v3.500H20z" fill="#b0b0b0" stroke="none" /></Svg></Tool>
            </ScreenTools>
          </Tools>
        </Column>
        <Divider />
        <Document>
          <DocTabs>
            <DocTab>
              <h1>Untitled-1 @ 50% (Layer 1, RGB/8) *</h1>
              <Plain aria-label="Close document"><Svg w={7} h={7}><path d="M.5.500l6 6M6.500.500l-6 6" stroke="#bbb" /></Svg></Plain>
            </DocTab>
          </DocTabs>
          <Canvas>
            <Paper>
              <Svg w={1050} h={750}>
                <g stroke="#808080" shapeRendering="crispEdges" transform="translate(.5 .5)">
                  <path d={"M" + anchors.map((a) => a.join(" ")).join("L") + "L516 234"} />
                  <path d="M148 229L326 121L445 284" />
                  {anchors.map(([x, y]) => <rect key={x} x={x - 2} y={y - 2} width="4" height="4" fill="#fff" />)}
                  <rect x="514" y="232" width="4" height="4" fill="#808080" />
                </g>
              </Svg>
            </Paper>
          </Canvas>
          <VScroll><i /><span /><ScrollDown /></VScroll>
          <Status>
            <Zoom aria-label="Zoom level" defaultValue="50%" />
            <DocInfo>2100 px x 1500 px (300 ppi)<Side /></DocInfo>
            <HScroll><Side left /><span /><Side /></HScroll>
          </Status>
          <History />
        </Document>
        <Divider />
        <Column>
          <DockHead $end><Chevrons left /></DockHead>
          <IconDock>
            <Grip />
            <DockButton $on aria-label="History"><Svg w={16} h={18}><path d="M1 1h4v4H1zM1 7h4v4H1z" strokeWidth="1.200" /><path {...F} d="M.5 12.500h5v5h-5zM8 1l5.500 1L10 7z" /><path d="M10.500 4c4.500 2.500 4 8.500-1.500 11" strokeWidth="1.800" /></Svg></DockButton>
            <DockButton aria-label="Comments"><Svg w={14} h={14}><path {...F} d="M1.500 0h11A1.500 1.500 0 0 1 14 1.500v7a1.500 1.500 0 0 1-1.500 1.500H7l-4 4v-4H1.500A1.500 1.500 0 0 1 0 8.500v-7A1.500 1.500 0 0 1 1.500 0z" /></Svg></DockButton>
          </IconDock>
        </Column>
        <Divider />
        <Column>
          <DockHead $end><Chevrons /></DockHead>
          <Panel $h={267}>
            <TabHead names={["Color", "Swatches", "Gradients", "Patterns"]} />
            <ColorBody>
              <ColorSwatches>
                <Swatches>
                  <Swatch aria-label="Background color" />
                  <Swatch $front aria-label="Foreground color" />
                </Swatches>
              </ColorSwatches>
              <Field><Svg w={7} h={7}><path d="M0 1a5 5 0 0 1 5.500 6" stroke="#fff" strokeWidth="1.200" /></Svg></Field>
              <HueMarker><Svg w={9} h={9}><path d="M1 1h3l4 3.500L4 8H1z" fill="#eee" stroke="#333" strokeWidth=".6" /></Svg></HueMarker>
              <Hue type="range" aria-label="Hue" />
            </ColorBody>
          </Panel>
          <PropertiesPanel />
          <LayersPanel />
        </Column>
      </Workspace>

      <Taskbar>
        <Start aria-label="Start"><Svg w={17} h={17}><path fill="#fff" stroke="none" d="M0 2.500L7.500 1.400V8H0zM8.500 1.200L17 0v8H8.500zM0 9h7.500v6.600L0 14.500zM8.500 9H17v8l-8.500-1.200z" /></Svg></Start>
        <Search>
          <Svg w={17} h={17}><circle cx="10.500" cy="6.500" r="5.500" strokeWidth="1.300" stroke="#222" /><path d="M6.500 10.500L.5 16.500" strokeWidth="1.300" stroke="#222" /></Svg>
          <input placeholder="Type here to search" aria-label="Type here to search" />
          <Svg w={48} h={28}>
            <circle cx="14" cy="15" r="12" fill="#ee6f3a" stroke="none" />
            <path d="M3 11c7 0 16 3 22 9M12 3c5 6 7 15 4 24M4 21c4-8 10-12 19-14M7 5c3 8 2 14-1 19" stroke="#6b2b14" strokeWidth="1.100" />
            <path d="M28 11l7-3 8 1 4 4-1 5-5 2-3 0-4 7-4-2 3-9z" fill="#9d9da1" stroke="none" /><circle cx="40" cy="13" r="4.500" fill="#c9c9cc" stroke="none" /><circle cx="40" cy="13" r="1.800" fill="#8a8a8e" stroke="none" />
            <path d="M29 8V3l5-1.500v5" stroke="#333" strokeWidth="1.300" /><circle cx="28" cy="8.500" r="1.500" fill="#333" stroke="none" /><circle cx="33" cy="7" r="1.500" fill="#333" stroke="none" />
            <path d="M42 20l1.200 2.800L46 24l-2.800 1.200L42 28l-1.200-2.800L38 24l2.800-1.200z" fill="#cf6fd8" stroke="none" /><circle cx="2" cy="25" r="1.300" fill="#f3c43c" stroke="none" /><circle cx="26" cy="4" r="1" fill="#4bb9c9" stroke="none" />
          </Svg>
        </Search>
        <TaskApps />
        <Tray>
          <Weather>
            <Svg w={23} h={16}><defs><linearGradient id="cloud" x2="0" y2="1"><stop stopColor="#a9c8f2" /><stop offset="1" stopColor="#eef5ff" /></linearGradient></defs><path fill="url(#cloud)" stroke="none" d="M5 15.500a4.700 4.700 0 0 1-.5-9.300A7.200 7.200 0 0 1 18 6.500a4.600 4.600 0 0 1 .5 9z" /></Svg>
            {"14°C  Cloudy"}
          </Weather>
          <TrayIcons>
            <Svg w={14} h={9}><path d="M1 8l6-6 6 6" stroke="#fff" strokeWidth="1.300" /></Svg>
            <Svg w={20} h={16}><g stroke="#ddd" strokeWidth="1.300"><path d="M4 14C4 7 9 2 16 2M7 14.500C7 9 11 5 16 5M10.500 14.500C10.500 11 13 8.500 16 8.500" /><circle cx="14.500" cy="13" r="1.600" fill="#fff" stroke="none" /></g></Svg>
            <Svg w={17} h={14}><g stroke="#fff" strokeWidth="1.200"><path d="M1 5h2.500L7 2v10L3.500 9H1z" /><path d="M9.500 4.500c1 1.500 1 3.500 0 5M12 3c2 2.500 2 5.500 0 8M14.500 1.500c2.500 3.500 2.500 7.500 0 11" /></g></Svg>
          </TrayIcons>
          <Clock>1:49 PM<br />6/9/2022</Clock>
          <Notice aria-label="6 notifications">
            <Svg w={16} h={16} vb="0 0 16 16"><path fill="#fff" stroke="none" d="M0 0h16v12H8l-4 3.500V12H0z" /><path d="M3 3.500h10M3 6h10M3 8.500h7" stroke="#1e1e1f" /></Svg>
            <span>6</span>
          </Notice>
        </Tray>
      </Taskbar>
    </Screen>
  );
}
